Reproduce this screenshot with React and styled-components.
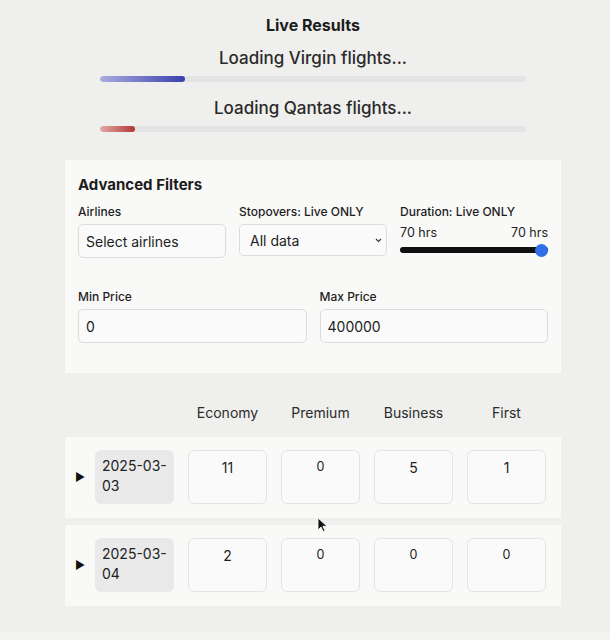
import React from "react";
import styled, { createGlobalStyle } from "styled-components";

const Global = createGlobalStyle`
  html, body { margin: 0; padding: 0; background: #f4f4f3; }
  body { font-family: Inter, "Noto Sans", sans-serif; color: #1c1c1c; }
  * { box-sizing: border-box; }
`;

const Page = styled.div`
  position: relative;
  min-height: 632px;
  background: #efefed;
  padding: 15px 49px 0 65px;
  display: flex;
  flex-direction: column;
`;

const Title = styled.h2`
  margin: 0 0 12px;
  font-size: 16px;
  line-height: 20px;
  font-weight: 700;
  text-align: center;
`;

const Progress = styled.div`
  display: flex;
  flex-direction: column;
  align-items: center;
  padding: 0 35px;
  margin-bottom: 15px;
`;

const ProgressText = styled.div`
  font-size: 17px;
  line-height: 22px;
  font-weight: 500;
  color: #2a2a2a;
  margin-bottom: 7px;
`;

const Track = styled.div`
  width: 100%;
  height: 6px;
  border-radius: 3px;
  background: #e3e3e3;
  overflow: hidden;
`;

const Fill = styled.div`
  height: 100%;
  border-radius: 3px;
  background: ${(p) => p.$bg};
`;

const Card = styled.section`
  background: #f9f9f8;
  margin-top: 13px;
  padding: 15px 13px 30px;
`;

const CardTitle = styled.h3`
  margin: 0 0 9px;
  font-size: 15px;
  line-height: 20px;
  font-weight: 700;
`;

const Grid = styled.div`
  display: grid;
  grid-template-columns: repeat(${(p) => p.$cols}, minmax(0, 1fr));
  column-gap: 13px;
  margin-bottom: ${(p) => p.$mb || 0}px;
`;

const Field = styled.div`
  display: flex;
  flex-direction: column;
  min-width: 0;
`;

const Label = styled.label`
  font-size: 12px;
  line-height: 16px;
  font-weight: 500;
  color: #1e1e1e;
  margin-bottom: 4px;
  white-space: nowrap;
`;

const Input = styled.input`
  width: 100%;
  height: 34px;
  border: 1px solid #dcdcdc;
  border-radius: 5px;
  background: #fafafa;
  padding: 0 7px;
  font-family: Inter, "Noto Sans", sans-serif;
  font-size: 14px;
  color: #222;
  outline: none;
`;

const SelectWrap = styled.div`
  position: relative;
`;

const Select = styled.select`
  width: 100%;
  height: 32px;
  appearance: none;
  border: 1px solid #dcdcdc;
  border-radius: 5px;
  background: #fafafa;
  padding: 0 10px;
  font-family: Inter, "Noto Sans", sans-serif;
  font-size: 14px;
  color: #222;
  outline: none;
`;

const Chevron = styled.svg`
  position: absolute;
  right: 5px;
  top: 14px;
  pointer-events: none;
`;

const RangeLabels = styled.div`
  display: flex;
  justify-content: space-between;
  font-size: 12.5px;
  line-height: 16px;
  color: #222;
  margin-top: 1px;
`;

const Range = styled.input`
  appearance: none;
  -webkit-appearance: none;
  width: 100%;
  margin: 2px 0 0;
  height: 14px;
  background: transparent;
  &::-webkit-slider-runnable-track {
    height: 6px;
    border-radius: 3px;
    background: #111;
  }
  &::-webkit-slider-thumb {
    -webkit-appearance: none;
    width: 13px;
    height: 13px;
    border-radius: 50%;
    background: #2f6ee6;
    margin-top: -3.5px;
    border: none;
  }
`;

const HeaderRow = styled.div`
  display: flex;
  margin-top: 30px;
  padding-left: 123px;
  margin-bottom: 14px;
`;

const Cells = styled.div`
  display: grid;
  grid-template-columns: repeat(4, 79px);
  column-gap: 14px;
`;

const HeadCell = styled.div`
  font-size: 14px;
  line-height: 20px;
  color: #2b2b2b;
  text-align: center;
`;

const Row = styled.div`
  display: flex;
  align-items: center;
  background: #f9f9f8;
  padding: 13px 14px 14px 10px;
  margin-bottom: 7px;
`;

const Arrow = styled.div`
  width: 20px;
  font-size: 11px;
  line-height: 1;
  color: #111;
`;

const DateBox = styled.div`
  width: 79px;
  height: 54px;
  margin-right: 14px;
  border-radius: 6px;
  background: #e9e9ea;
  padding: 6px 0 0 7px;
  font-size: 14px;
  line-height: 20px;
  color: #222;
  white-space: nowrap;
`;

const Cell = styled.div`
  height: 54px;
  border: 1px solid #e4e4e4;
  border-radius: 6px;
  background: #fafafa;
  text-align: center;
  padding-top: ${(p) => (p.$zero ? 6 : 7)}px;
  font-size: ${(p) => (p.$zero ? 12.5 : 14)}px;
  line-height: 20px;
  color: #222;
`;

const Cursor = styled.svg`
  position: absolute;
  left: 317px;
  top: 517px;
`;

const rows = [
  { date: ["2025-03-", "03"], vals: [11, 0, 5, 1] },
  { date: ["2025-03-", "04"], vals: [2, 0, 0, 0] },
];

export default function App() {
  return (
    <>
      <Global />
      <Page>
        <Title>Live Results</Title>
        <Progress>
          <ProgressText>Loading Virgin flights...</ProgressText>
          <Track>
            <Fill style={{ width: "20%" }} $bg="linear-gradient(90deg, #a9addf, #3b3fae)" />
          </Track>
        </Progress>
        <Progress>
          <ProgressText>Loading Qantas flights...</ProgressText>
          <Track>
            <Fill style={{ width: "8.3%" }} $bg="linear-gradient(90deg, #e3a9a6, #b23a36)" />
          </Track>
        </Progress>

        <Card>
          <CardTitle>Advanced Filters</CardTitle>
          <Grid $cols={3} $mb={31}>
            <Field>
              <Label>Airlines</Label>
              <Input readOnly value="Select airlines" />
            </Field>
            <Field>
              <Label>Stopovers: Live ONLY</Label>
              <SelectWrap>
                <Select defaultValue="all">
                  <option value="all">All data</option>
                </Select>
                <Chevron width="7" height="5" viewBox="0 0 7 5">
                  <path d="M1 1l2.5 2.5L6 1" fill="none" stroke="#333" strokeWidth="1.1" />
                </Chevron>
              </SelectWrap>
            </Field>
            <Field>
              <Label>Duration: Live ONLY</Label>
              <RangeLabels>
                <span>70 hrs</span>
                <span>70 hrs</span>
              </RangeLabels>
              <Range type="range" min="0" max="70" defaultValue="70" />
            </Field>
          </Grid>
          <Grid $cols={2}>
            <Field>
              <Label>Min Price</Label>
              <Input readOnly value="0" />
            </Field>
            <Field>
              <Label>Max Price</Label>
              <Input readOnly value="400000" />
            </Field>
          </Grid>
        </Card>

        <HeaderRow>
          <Cells>
            <HeadCell>Economy</HeadCell>
            <HeadCell>Premium</HeadCell>
            <HeadCell>Business</HeadCell>
            <HeadCell>First</HeadCell>
          </Cells>
        </HeaderRow>

        {rows.map((r) => (
          <Row key={r.date.join("")}>
            <Arrow>▶</Arrow>
            <DateBox>
              {r.date[0]}
              <br />
              {r.date[1]}
            </DateBox>
            <Cells>
              {r.vals.map((v, i) => (
                <Cell key={i} $zero={v === 0}>{v}</Cell>
              ))}
            </Cells>
          </Row>
        ))}

        <Cursor width="10" height="16" viewBox="0 0 10 16">
          <path d="M1 1v12l3-3 2.2 4.6 1.8-.8L5.8 9.3H10z" fill="#111" stroke="#fff" strokeWidth="0.8" />
        </Cursor>
      </Page>
    </>
  );
}
